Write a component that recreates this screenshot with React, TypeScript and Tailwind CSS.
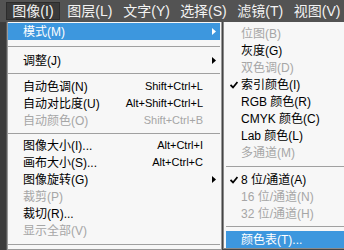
const font = { fontFamily: '"Liberation Sans", "Noto Sans CJK SC", sans-serif' };

const menubar = ['图像(I)', '图层(L)', '文字(Y)', '选择(S)', '滤镜(T)', '视图(V)'];

type Item =
   | { sep: number }
   | { label: string; key?: string; arrow?: boolean; off?: boolean; active?: boolean; check?: boolean; sep?: undefined };

const mainItems: Item[] = [
   { label: '模式(M)', arrow: true, active: true },
   { sep: 12 },
   { label: '调整(J)', arrow: true },
   { sep: 9 },
   { label: '自动色调(N)', key: 'Shift+Ctrl+L' },
   { label: '自动对比度(U)', key: 'Alt+Shift+Ctrl+L' },
   { label: '自动颜色(O)', key: 'Shift+Ctrl+B', off: true },
   { sep: 8 },
   { label: '图像大小(I)...', key: 'Alt+Ctrl+I' },
   { label: '画布大小(S)...', key: 'Alt+Ctrl+C' },
   { label: '图像旋转(G)', arrow: true },
   { label: '裁剪(P)', off: true },
   { label: '裁切(R)...' },
   { label: '显示全部(V)', off: true },
   { sep: 10 },
];

const subItems: Item[] = [
   { label: '位图(B)', off: true },
   { label: '灰度(G)' },
   { label: '双色调(D)', off: true },
   { label: '索引颜色(I)', check: true },
   { label: 'RGB 颜色(R)' },
   { label: 'CMYK 颜色(C)' },
   { label: 'Lab 颜色(L)' },
   { label: '多通道(M)', off: true },
   { sep: 10 },
   { label: '8 位/通道(A)', check: true },
   { label: '16 位/通道(N)', off: true },
   { label: '32 位/通道(H)', off: true },
   { sep: 9 },
   { label: '颜色表(T)...', active: true },
];

const Arrow = ({ white }: { white?: boolean }) => (
   <svg width="4" height="7" viewBox="0 0 4 7" className="shrink-0">
      <path d="M0 0 L4 3.5 L0 7 Z" fill={white ? '#ffffff' : '#000000'} />
   </svg>
);

const Check = () => (
   <svg width="8" height="8" viewBox="0 0 8 8">
      <path d="M0.5 4 L3 6.5 L7.5 1" stroke="#000" strokeWidth="1.8" fill="none" />
   </svg>
);

const Row = ({ item, sub }: { item: Item; sub?: boolean }) => {
   if (item.sep !== undefined) {
      return (
         <div className="flex items-center" style={{ height: item.sep }}>
            <div className="w-full border-t border-[#a0a0a0]" />
         </div>
      );
   }
   const color = item.active ? 'text-white' : item.off ? 'text-[#a6a6a6]' : 'text-black';
   return (
      <div className={`h-[17px] flex items-center ${item.active ? 'bg-[#3d97de]' : ''} ${color}`}>
         {sub ? (
            <span className="w-[15px] pl-[4px] flex items-center">{item.check && <Check />}</span>
         ) : (
            <span className="w-[15px]" />
         )}
         <span className="flex-1 whitespace-nowrap">{item.label}</span>
         {item.key && <span className="whitespace-nowrap text-[11px] pr-[9px]">{item.key}</span>}
         {!sub && (
            <span className="w-[8px] flex items-center">{item.arrow && <Arrow white={item.active} />}</span>
         )}
      </div>
   );
};

const App = () => {
   return (
      <div className="w-[344px] h-[250px] overflow-hidden bg-[#454545] flex flex-col text-[12px] leading-none" style={font}>
         <div className="h-[22px] bg-[#535353] flex items-center gap-[3px] pl-[6px] text-[14px] text-[#f2f2f2] shrink-0">
            {menubar.map((m, idx) => (
               <span
                  key={idx}
                  className={`h-[18px] w-[56px] flex items-center justify-center whitespace-nowrap ${idx === 0 ? 'bg-[#3a3a3a] border border-[#2c2c2c]' : ''}`}>
                  {m}
               </span>
            ))}
         </div>
         <div className="flex flex-1 min-h-0">
            <div className="w-[7px] bg-[#3c3c3c] border-r border-[#5a5a5a]" />
            <div className="w-[215px] bg-[#f7f7f7] border border-t-0 border-[#9a9a9a] pt-[1px] pr-[1px]">
               {mainItems.map((it, idx) => (
                  <Row key={idx} item={it} />
               ))}
            </div>
            <div className="flex-1 bg-[#f7f7f7] border-l border-b border-[#8a8a8a] ml-[1px] pt-[3px] pl-[2px] self-start">
               {subItems.map((it, idx) => (
                  <Row key={idx} item={it} sub />
               ))}
            </div>
         </div>
      </div>
   );
};

export default App;
